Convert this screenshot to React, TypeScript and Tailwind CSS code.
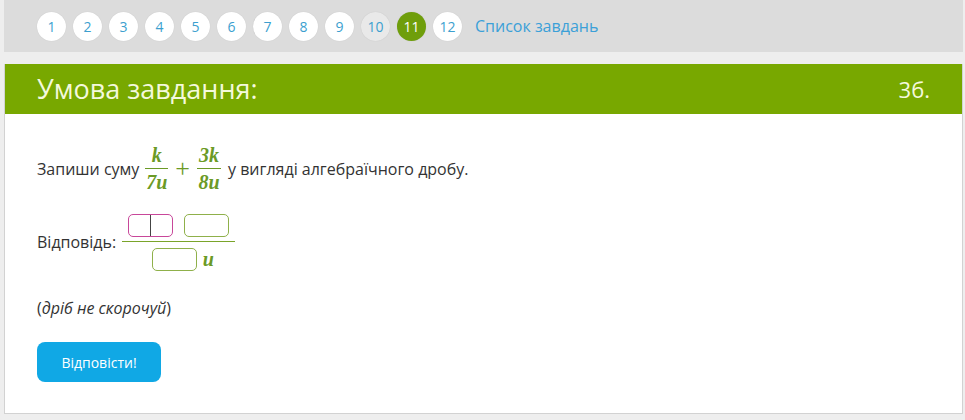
import React from "react";

export default function App() {
  const nums = [1, 2, 3, 4, 5, 6, 7, 8, 9, 10, 11, 12];
  const mathFont = { fontFamily: '"Liberation Serif", "DejaVu Serif", serif' };
  return (
    <div className="w-[965px] h-[420px] bg-[#eeeeee] overflow-hidden" style={{ fontFamily: '"Open Sans", sans-serif' }}>
      <div className="ml-[4px] mr-[2px] h-[52px] bg-[#dcdcdc] flex items-center pl-[33px] gap-[7px]">
        {nums.map((n) => {
          const cls =
            n === 11
              ? "bg-[#6f9e0b] text-white"
              : n === 10
              ? "bg-[#e9e9e9] text-[#3c9fcf]"
              : "bg-white text-[#3c9fcf]";
          return (
            <div
              key={n}
              className={`w-[29px] h-[29px] rounded-full flex items-center justify-center text-[14px] shadow-[0_0_1px_rgba(0,0,0,0.15)] ${cls}`}
            >
              {n}
            </div>
          );
        })}
        <span className="ml-[6px] text-[16px] text-[#3ba0d8]">Список завдань</span>
      </div>
      <div className="ml-[4px] mr-[2px] mt-[12px] h-[350px] bg-white border border-[#d2d2d2] border-t-0">
        <div className="h-[50px] bg-[#78a800] flex items-center justify-between pl-[32px] pr-[32px]">
          <span className="text-[27px] text-[#f4f9dc]">Умова завдання:</span>
          <span className="text-[22px] text-[#f4f9dc]">3б.</span>
        </div>
        <div className="pl-[32px] pt-[28px] text-[16px] text-[#333333]">
          <div className="flex items-center h-[54px]">
            <span>Запиши суму</span>
            <span className="ml-[4px] text-[#6b9a26] font-bold italic text-[20px] inline-flex items-center" style={mathFont}>
              <span className="inline-flex flex-col items-center mx-[2px]">
                <span className="leading-[25px]">k</span>
                <span className="h-[1px] w-[23px] bg-[#6b9a26]" />
                <span className="leading-[27px]">7u</span>
              </span>
              <span className="font-normal not-italic text-[26px] mx-[5px] leading-none">+</span>
              <span className="inline-flex flex-col items-center mx-[2px]">
                <span className="leading-[25px]">3k</span>
                <span className="h-[1px] w-[24px] bg-[#6b9a26]" />
                <span className="leading-[27px]">8u</span>
              </span>
            </span>
            <span className="ml-[5px]">у вигляді алгебраїчного дробу.</span>
          </div>
          <div className="flex items-center mt-[17px] h-[58px]">
            <span>Відповідь:</span>
            <span className="ml-[6px] inline-flex flex-col items-center">
              <span className="flex gap-[11px] px-[6px] pb-[4px]">
                <span className="w-[45px] h-[23px] rounded-[5px] border border-[#c8479a] flex">
                  <span className="ml-[21px] w-[1px] h-full bg-[#444]" />
                </span>
                <span className="w-[45px] h-[23px] rounded-[5px] border border-[#8fb04a]" />
              </span>
              <span className="h-[1px] w-[113px] bg-[#7aa42a]" />
              <span className="flex items-center pt-[6px] pl-[8px]">
                <span className="w-[45px] h-[23px] rounded-[5px] border border-[#8fb04a]" />
                <span className="ml-[6px] text-[#6b9a26] font-bold italic text-[20px] leading-none" style={mathFont}>
                  u
                </span>
              </span>
            </span>
          </div>
          <div className="mt-[26px] leading-[22px]">
            (<span className="italic">дріб не скорочуй</span>)
          </div>
          <button className="mt-[23px] w-[124px] h-[40px] rounded-[8px] bg-[#10a8e5] text-white text-[14px]">
            Відповісти!
          </button>
        </div>
      </div>
    </div>
  );
}
